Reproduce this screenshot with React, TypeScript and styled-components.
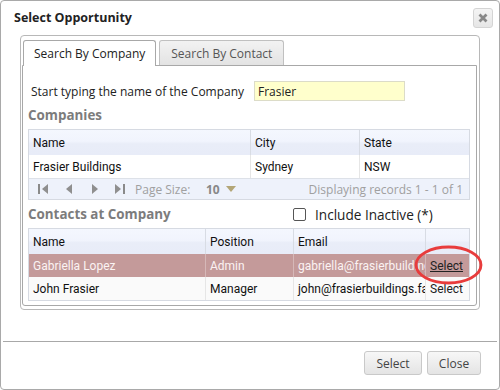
import React from "react";
import styled, { createGlobalStyle } from "styled-components";

const Global = createGlobalStyle`
  html, body { margin: 0; padding: 0; background: #fff; }
  body { font-family: "Open Sans", "Noto Sans", "Liberation Sans", sans-serif; color: #222; }
  * { box-sizing: border-box; }
`;

const Dialog = styled.div`
  width: 500px;
  height: 390px;
  border: 1px solid #a9a9a9;
  border-radius: 4px;
  background: #fff;
  display: flex;
  flex-direction: column;
`;

const TitleBar = styled.div`
  height: 33px;
  display: flex;
  align-items: center;
  justify-content: space-between;
  padding: 0 6px 0 13px;
`;

const Title = styled.div`
  font-size: 12.5px;
  font-weight: 700;
  color: #222;
`;

const CloseBtn = styled.div`
  width: 20px;
  height: 20px;
  border: 1px solid #d4d4d4;
  border-radius: 3px;
  background: linear-gradient(#f4f4f4, #e6e6e6);
  display: flex;
  align-items: center;
  justify-content: center;
`;

const Content = styled.div`
  padding: 1px 19px 0 19px;
`;

const OuterBox = styled.div`
  height: 275px;
  border: 1px solid #b8b8b8;
  border-radius: 4px;
  padding: 4px 2px 3px 1px;
  display: flex;
  flex-direction: column;
`;

const TabStrip = styled.div`
  display: flex;
  align-items: flex-end;
  gap: 3px;
  padding-left: 1px;
  height: 25px;
  position: relative;
  z-index: 1;
`;

const Tab = styled.div<{ $active?: boolean }>`
  height: ${(p) => (p.$active ? "26px" : "25px")};
  margin-bottom: ${(p) => (p.$active ? "-1px" : "0")};
  align-self: flex-start;
  padding: 0 ${(p) => (p.$active ? "10px" : "11px")};
  display: flex;
  align-items: center;
  font-size: 12px;
  color: ${(p) => (p.$active ? "#222" : "#555")};
  border: 1px solid ${(p) => (p.$active ? "#a8a8a8" : "#c0c0c0")};
  border-bottom: none;
  border-radius: 3px 3px 0 0;
  background: ${(p) => (p.$active ? "#fff" : "linear-gradient(#f2f2f2, #e3e3e3)")};
`;

const Panel = styled.div`
  flex: 1;
  border: 1px solid #a8a8a8;
  border-radius: 0 0 3px 3px;
  padding: 0 6px 0 5px;
  display: flex;
  flex-direction: column;
`;

const SearchRow = styled.div`
  margin-top: 15px;
  height: 20px;
  display: flex;
  align-items: center;
  padding-left: 3px;
`;

const Label = styled.div`
  width: 223px;
  font-size: 12px;
  color: #222;
  white-space: nowrap;
`;

const SearchInput = styled.div`
  width: 151px;
  height: 20px;
  border: 1px solid #dcdcc8;
  background: #ffffcc;
  font-size: 12px;
  padding: 0 3px;
  display: flex;
  align-items: center;
  color: #222;
`;

const Heading = styled.div`
  margin-top: 6px;
  height: 16px;
  line-height: 16px;
  font-size: 13.4px;
  font-weight: 700;
  color: #7c7c7c;
`;

const HeadingRow = styled.div`
  height: 28px;
  display: flex;
  align-items: center;
`;

const HeadingInline = styled(Heading)`
  margin-top: 0;
  width: 265px;
`;

const Check = styled.div`
  width: 13px;
  height: 13px;
  border: 1px solid #555;
  border-radius: 2px;
  background: #fff;
  margin-right: 9px;
`;

const CheckLabel = styled.div`
  font-size: 13.6px;
  color: #222;
`;

const Grid = styled.div<{ $cols: string }>`
  position: relative;
  border: 1px solid #d6dae2;
  display: grid;
  grid-template-columns: ${(p) => p.$cols};
  font-family: Roboto, "Open Sans", sans-serif;
  font-size: 12px;
`;

const HeadCell = styled.div<{ $last?: boolean }>`
  height: 25px;
  display: flex;
  align-items: center;
  padding: 0 4px;
  color: #111;
  background: linear-gradient(#f4f7fe 0%, #f1f4fd 45%, #e9edf8 55%, #e8ecf8 100%);
  border-right: ${(p) => (p.$last ? "none" : "1px solid #d8dce4")};
`;

const Cell = styled.div<{ $last?: boolean; $sel?: boolean; $alt?: boolean }>`
  height: 23px;
  display: flex;
  align-items: center;
  padding: 0 4px;
  white-space: nowrap;
  overflow: hidden;
  color: ${(p) => (p.$sel ? "#fbf3f3" : "#111")};
  background: ${(p) => (p.$sel ? "#c49a9a" : p.$alt ? "#fafafa" : "#fff")};
  border-right: ${(p) =>
    p.$last ? "none" : p.$sel ? "1px solid #d6b8b8" : "1px solid #e6e6e6"};
`;

const SelectLink = styled.span<{ $u?: boolean }>`
  color: #222;
  text-decoration: ${(p) => (p.$u ? "underline" : "none")};
`;

const Pager = styled.div`
  grid-column: 1 / -1;
  height: 21px;
  border-top: 1px solid #dde1e8;
  background: #eef2fb;
  display: flex;
  align-items: center;
  padding: 0 6px 0 8px;
  color: #999;
  font-family: "Open Sans", sans-serif;
  font-size: 12px;
`;

const PagerIcons = styled.div`
  display: flex;
  align-items: center;
`;

const PagerBtn = styled.div<{ $w: number }>`
  width: ${(p) => p.$w}px;
  display: flex;
  align-items: center;
`;

const PageSize = styled.div`
  margin-left: 3px;
  width: 71px;
  color: #a0a0a0;
`;

const PageNum = styled.div`
  font-weight: 700;
  color: #888;
  display: flex;
  align-items: center;
  gap: 6px;
`;

const Displaying = styled.div`
  margin-left: auto;
  color: #a0a0a0;
`;

const Ring = styled.svg`
  position: absolute;
  left: 385px;
  top: 16px;
  overflow: visible;
  pointer-events: none;
`;

const Separator = styled.div`
  margin: 31px 2px 0 2px;
  height: 1px;
  background: #a8a8a8;
`;

const Footer = styled.div`
  display: flex;
  justify-content: flex-end;
  gap: 5px;
  padding: 9px 18px 0 0;
`;

const Button = styled.div<{ $w: number }>`
  width: ${(p) => p.$w}px;
  height: 24px;
  border: 1px solid #c9c9c9;
  border-radius: 3px;
  background: linear-gradient(#f7f7f7, #e4e4e4);
  display: flex;
  align-items: center;
  justify-content: center;
  font-size: 12px;
  color: #444;
`;

const Tri = ({ dir, bar }: { dir: "l" | "r"; bar?: boolean }) => (
  <svg width="12" height="12" viewBox="0 0 12 12">
    {dir === "l" ? (
      <>
        {bar && <rect x="1" y="1" width="2" height="10" fill="#8a8a8a" />}
        <polygon points={bar ? "11,1 11,11 5,6" : "7,1 7,11 1,6"} fill="#8f8f8f" />
      </>
    ) : (
      <>
        <polygon points="1,1 1,11 7,6" fill="#8f8f8f" />
        {bar && <rect x="9" y="1" width="2" height="10" fill="#8a8a8a" />}
      </>
    )}
  </svg>
);

export default function App() {
  return (
    <>
      <Global />
      <Dialog>
        <TitleBar>
          <Title>Select Opportunity</Title>
          <CloseBtn>
            <svg width="10" height="10" viewBox="0 0 10 10">
              <path d="M1.5 1.5 L8.5 8.5 M8.5 1.5 L1.5 8.5" stroke="#888" strokeWidth="2.8" />
            </svg>
          </CloseBtn>
        </TitleBar>
        <Content>
          <OuterBox>
            <TabStrip>
              <Tab $active>Search By Company</Tab>
              <Tab>Search By Contact</Tab>
            </TabStrip>
            <Panel>
              <SearchRow>
                <Label>Start typing the name of the Company</Label>
                <SearchInput>Frasier</SearchInput>
              </SearchRow>
              <Heading>Companies</Heading>
              <Grid $cols="222px 109px 1fr" style={{ marginTop: 6 }}>
                <HeadCell>Name</HeadCell>
                <HeadCell>City</HeadCell>
                <HeadCell $last>State</HeadCell>
                <Cell>Frasier Buildings</Cell>
                <Cell>Sydney</Cell>
                <Cell $last>NSW</Cell>
                <Pager>
                  <PagerIcons>
                    <PagerBtn $w={28}><Tri dir="l" bar /></PagerBtn>
                    <PagerBtn $w={26}><Tri dir="l" /></PagerBtn>
                    <PagerBtn $w={23}><Tri dir="r" /></PagerBtn>
                    <PagerBtn $w={18}><Tri dir="r" bar /></PagerBtn>
                  </PagerIcons>
                  <PageSize>Page Size:</PageSize>
                  <PageNum>
                    10
                    <svg width="10" height="7" viewBox="0 0 10 7">
                      <polygon points="0,0 10,0 5,6" fill="#b3a677" />
                    </svg>
                  </PageNum>
                  <Displaying>Displaying records 1 - 1 of 1</Displaying>
                </Pager>
              </Grid>
              <HeadingRow>
                <HeadingInline>Contacts at Company</HeadingInline>
                <Check />
                <CheckLabel>Include Inactive (*)</CheckLabel>
              </HeadingRow>
              <Grid $cols="177px 88px 132px 1fr">
                <HeadCell>Name</HeadCell>
                <HeadCell>Position</HeadCell>
                <HeadCell>Email</HeadCell>
                <HeadCell $last></HeadCell>
                <Cell $sel>Gabriella Lopez</Cell>
                <Cell $sel>Admin</Cell>
                <Cell $sel>gabriella@frasierbuildings.fake</Cell>
                <Cell $sel $last><SelectLink $u>Select</SelectLink></Cell>
                <Cell $alt>John Frasier</Cell>
                <Cell $alt>Manager</Cell>
                <Cell $alt>john@frasierbuildings.fake</Cell>
                <Cell $alt $last><SelectLink>Select</SelectLink></Cell>
                <Ring width="70" height="40" viewBox="0 0 70 40">
                  <ellipse cx="34.5" cy="20" rx="32.5" ry="18" fill="none" stroke="#e83c3c" strokeWidth="2.8" />
                </Ring>
              </Grid>
            </Panel>
          </OuterBox>
        </Content>
        <Separator />
        <Footer>
          <Button $w={58}>Select</Button>
          <Button $w={54}>Close</Button>
        </Footer>
      </Dialog>
    </>
  );
}
